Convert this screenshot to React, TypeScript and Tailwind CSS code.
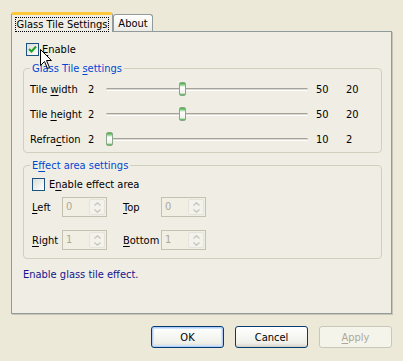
import React from "react"

const font = "font-['DejaVu_Sans_Condensed','Liberation_Sans',Arial,sans-serif]"

function Key({ children }: { children: React.ReactNode }) {
  return <span className="underline underline-offset-[2px]">{children}</span>
}

function CheckBox({ checked }: { checked?: boolean }) {
  return (
    <div className="w-[13px] h-[13px] shrink-0 border border-[#1C5180] bg-[linear-gradient(135deg,#DCDCD7,#FFFFFF)] flex items-center justify-center">
      {checked && (
        <svg width="9" height="9" viewBox="0 0 9 9">
          <path d="M1 4 L3.5 6.5 L8 1.5" fill="none" stroke="#21A121" strokeWidth="2" />
        </svg>
      )}
    </div>
  )
}

function Slider({ value, min, max }: { value: number; min: number; max: number }) {
  const t = (value - min) / (max - min)
  return (
    <div className="relative w-[202px] h-[25px] flex items-center">
      <div className="w-full h-[3px] rounded-[2px] border-t border-[#A3A29B] bg-[#DCDAD0] border-b border-b-white" />
      <div
        className="absolute top-[5px] w-[7px] h-[14px] rounded-[2px] border border-[#8AA58A] bg-[linear-gradient(to_bottom,#3FAF3F_0,#8FD18F_2px,#FFFFFF_4px,#F1F1EC_10px,#8FD18F_11px,#3FAF3F_100%)]"
        style={{ left: t * (202 - 7) }}
      />
    </div>
  )
}

function SpinBox({ value }: { value: string }) {
  return (
    <div className="w-[45px] h-[20px] border border-[#C4C1B2] bg-[#F1EFE4] flex items-stretch p-[1px]">
      <div className="flex-1 text-[#ACA899] pl-[2px] leading-[16px]">{value}</div>
      <div className="w-[16px] flex flex-col rounded-[2px] bg-[#F3F2EC] border border-[#E6E4DA]">
        <div className="flex-1 flex items-center justify-center">
          <svg width="7" height="4" viewBox="0 0 7 4"><path d="M0.5 3.5 L3.5 0.8 L6.5 3.5" fill="none" stroke="#C9C7BA" strokeWidth="1.4" /></svg>
        </div>
        <div className="flex-1 flex items-center justify-center">
          <svg width="7" height="4" viewBox="0 0 7 4"><path d="M0.5 0.5 L3.5 3.2 L6.5 0.5" fill="none" stroke="#C9C7BA" strokeWidth="1.4" /></svg>
        </div>
      </div>
    </div>
  )
}

function SliderRow({ label, min, max, value }: { label: React.ReactNode; min: number; max: number; value: number }) {
  return (
    <div className="flex items-center h-[25px]">
      <div className="w-[58px]">{label}</div>
      <div className="w-[18px]">{min}</div>
      <Slider value={value} min={min} max={max} />
      <div className="w-[38px] pl-[8px]">{max}</div>
      <div>{value}</div>
    </div>
  )
}

function Button({ children, primary, disabled }: { children: React.ReactNode; primary?: boolean; disabled?: boolean }) {
  return (
    <div
      className={
        disabled
          ? "w-[73px] h-[22px] rounded-[3px] border border-[#C9C7BA] bg-[#F5F4EA] text-[#ACA899] flex items-center justify-center"
          : primary
          ? "w-[73px] h-[22px] rounded-[3px] border border-[#003C74] bg-[linear-gradient(to_bottom,#FFFFFF,#F0F0EA_80%,#D6D0C5)] shadow-[inset_0_0_0_1px_#B4CCF6,inset_0_0_0_2px_#CEE7FF] flex items-center justify-center"
          : "w-[73px] h-[22px] rounded-[3px] border border-[#003C74] bg-[linear-gradient(to_bottom,#FFFFFF,#F0F0EA_80%,#D6D0C5)] flex items-center justify-center"
      }
    >
      {children}
    </div>
  )
}

export default function App() {
  return (
    <div className={`relative w-[403px] h-[361px] bg-[#ECE9D8] text-[11px] leading-[13px] text-black ${font}`}>
      {/* tabs */}
      <div className="flex items-end pl-[11px] pt-[12px]">
        <div className="relative z-10 -mb-px w-[102px] h-[20px] border-x border-[#919B9C] border-t-[3px] border-t-[#FFC83C] rounded-t-[3px] bg-[#F0EEE4] flex items-start justify-center pt-[2px]">
          <span className="border border-dotted border-black px-[1px]">Glass Tile Settings</span>
        </div>
        <div className="w-[40px] h-[17px] border border-b-0 border-[#919B9C] rounded-t-[3px] bg-[linear-gradient(to_bottom,#FFFFFF,#ECEBE6)] flex items-center justify-center">
          About
        </div>
      </div>

      {/* panel */}
      <div className="ml-[11px] w-[381px] h-[283px] border border-[#919B9C] bg-[#F0EEE4] shadow-[1px_1px_0_#C8C5B6] pl-[11px] pr-[9px] pt-[11px]">
        <div className="flex items-center gap-[3px] pl-[3px] h-[13px]">
          <CheckBox checked />
          <span><Key>E</Key>nable</span>
        </div>

        <fieldset className="mt-[6px] border border-[#D0D0BF] rounded-[4px] px-[6px] pb-0">
          <legend className="px-[2px] text-[#0046D5] leading-[13px]">Glass Tile <Key>s</Key>ettings</legend>
          <div className="pt-[2px]">
            <SliderRow label={<>Tile <Key>w</Key>idth</>} min={2} max={50} value={20} />
            <SliderRow label={<>Tile <Key>h</Key>eight</>} min={2} max={50} value={20} />
            <SliderRow label={<>Refra<Key>c</Key>tion</>} min={2} max={10} value={2} />
          </div>
        </fieldset>

        <fieldset className="mt-[6px] border border-[#D0D0BF] rounded-[4px] pl-[8px] pb-[8px]">
          <legend className="-ml-[2px] px-[2px] text-[#0046D5] leading-[13px]">E<Key>f</Key>fect area settings</legend>
          <div className="mt-[5px] flex items-center gap-[4px] h-[14px]">
            <CheckBox />
            <span>E<Key>n</Key>able effect area</span>
          </div>
          <div className="mt-[6px] flex items-center h-[20px]">
            <div className="w-[30px]"><Key>L</Key>eft</div>
            <SpinBox value="0" />
            <div className="w-[54px] pl-[16px]"><Key>T</Key>op</div>
            <SpinBox value="0" />
          </div>
          <div className="mt-[13px] flex items-center h-[20px]">
            <div className="w-[30px]"><Key>R</Key>ight</div>
            <SpinBox value="1" />
            <div className="w-[54px] pl-[16px]"><Key>B</Key>ottom</div>
            <SpinBox value="1" />
          </div>
        </fieldset>

        <div className="mt-[9px] text-[#14148C]">Enable glass tile effect.</div>
      </div>

      {/* buttons */}
      <div className="flex justify-end gap-[11px] pr-[11px] mt-[12px]">
        <Button primary>OK</Button>
        <Button>Cancel</Button>
        <Button disabled><Key>A</Key>pply</Button>
      </div>

      {/* mouse cursor */}
      <svg className="absolute left-[40px] top-[49px]" width="13" height="21" viewBox="0 0 13 21">
        <path d="M0.5 0.5 L0.5 16.5 L4.5 12.5 L7.5 19.5 L9.5 18.5 L6.5 11.5 L11.5 11.5 Z" fill="white" stroke="black" strokeWidth="1" />
      </svg>
    </div>
  )
}
